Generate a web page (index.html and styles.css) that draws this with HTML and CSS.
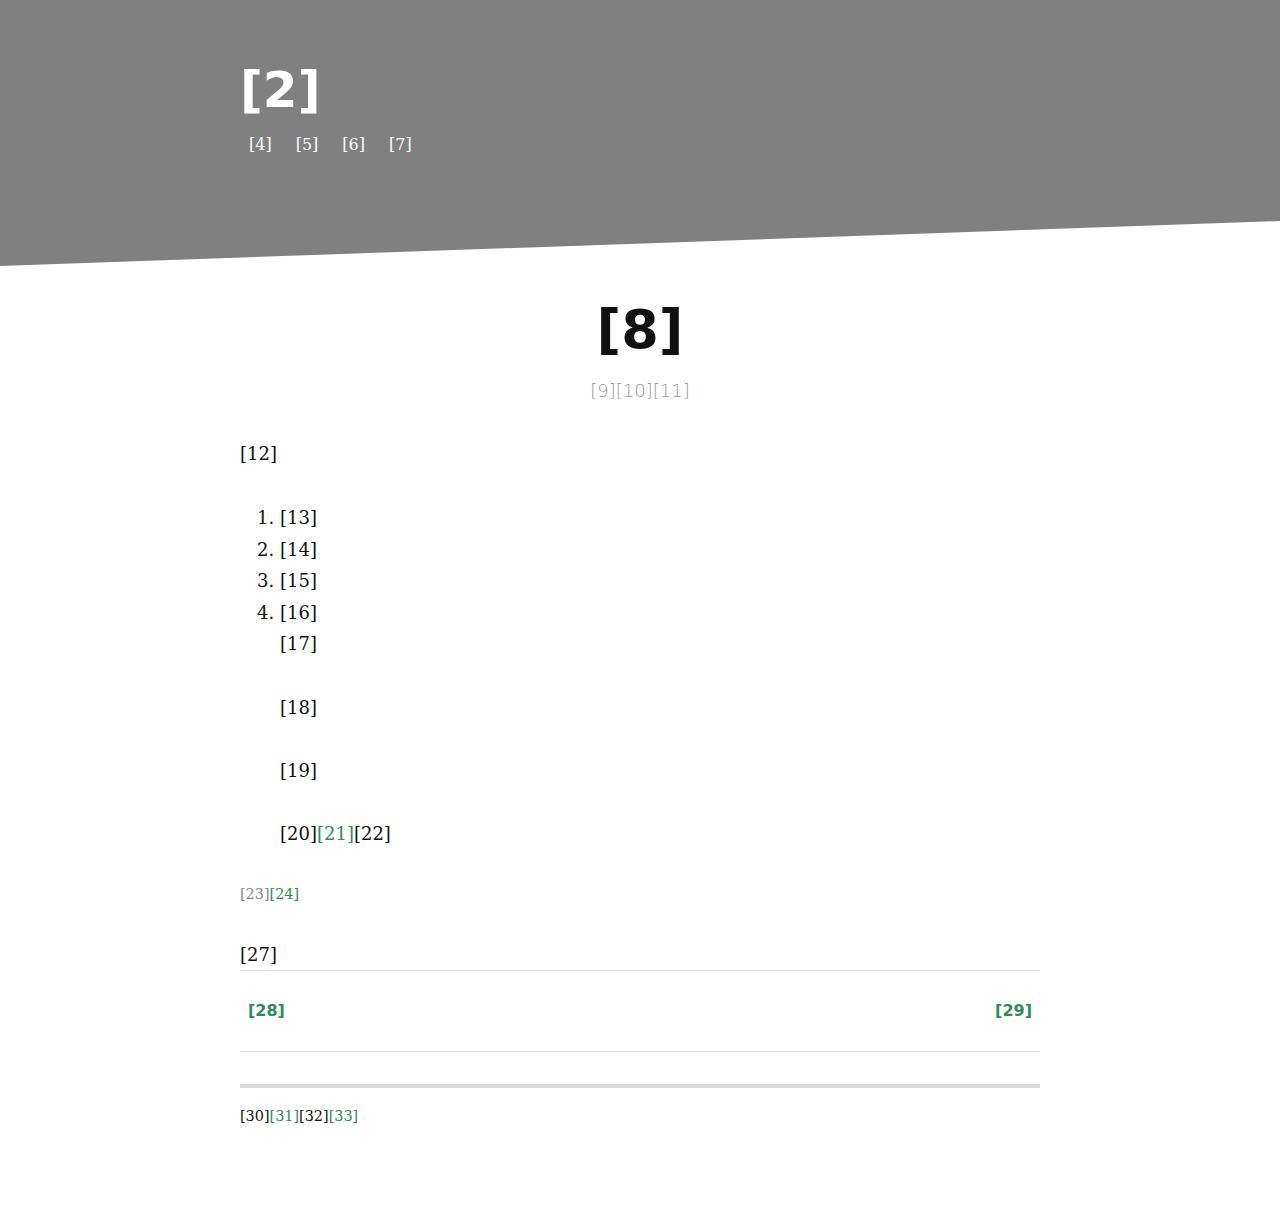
FILE: index.html
```html
<!DOCTYPE html>
<html>
<head>
<meta charset="utf-8">
<link rel="stylesheet" href="styles.css">
</head>
<body>
<header class="site-header">
  <div class="wrap">
    <h1 class="site-title">[2]</h1>
    <nav class="site-nav">
      <a href="#">[4]</a>
      <a href="#">[5]</a>
      <a href="#">[6]</a>
      <a href="#">[7]</a>
    </nav>
  </div>
</header>
<main class="wrap">
  <h2 class="post-title">[8]</h2>
  <div class="post-meta">[9][10][11]</div>
  <p class="para">[12]</p>
  <ol class="steps">
    <li>[13]</li>
    <li>[14]</li>
    <li>[15]</li>
    <li>[16]
      <div class="sub">
        <p class="para">[17]</p>
        <p class="para">[18]</p>
        <p class="para">[19]</p>
        <p class="para">[20]<a class="green" href="#">[21]</a>[22]</p>
      </div>
    </li>
  </ol>
  <p class="tags"><span class="muted">[23]</span><a class="green" href="#">[24]</a></p>
  <div class="related-title">[27]</div>
  <div class="pager">
    <a href="#">[28]</a>
    <a href="#">[29]</a>
  </div>
  <footer class="site-footer">
    <span>[30]</span><a class="green" href="#">[31]</a><span>[32]</span><a class="green" href="#">[33]</a>
  </footer>
</main>
</body>
</html>
```
FILE: styles.css
```css
html, body {
  margin: 0;
  padding: 0;
  background: #fff;
}
body {
  font-family: "DejaVu Serif", serif;
  font-size: 18px;
  line-height: 1.75;
  color: #111;
}
a { text-decoration: none; }
.wrap {
  width: 800px;
  margin: 0 auto;
}
.site-header {
  background: #808080;
  height: 266px;
  clip-path: polygon(0 0, 100% 0, 100% 83.1%, 0 100%);
  color: #fff;
}
.site-header .wrap {
  padding-top: 58px;
}
.site-title {
  margin: 0;
  font-family: "DejaVu Sans", sans-serif;
  font-weight: bold;
  font-size: 50px;
  line-height: 64px;
  color: #fff;
}
.site-nav {
  display: flex;
  gap: 24px;
  margin-left: 9px;
  margin-top: 11px;
  font-size: 16px;
  line-height: 24px;
}
.site-nav a { color: #fff; }
.post-title {
  margin: 30px 0 0;
  text-align: center;
  font-family: "DejaVu Sans", sans-serif;
  font-weight: bold;
  font-size: 54px;
  line-height: 68px;
  color: #111;
}
.post-meta {
  text-align: center;
  font-family: "DejaVu Sans", sans-serif;
  font-weight: 200;
  color: #999;
  margin-top: 11px;
  line-height: 32px;
}
.para {
  margin: 0 0 31.8px;
}
.post-meta + .para { margin-top: 31px; }
.steps {
  margin: 0;
  padding: 1px 0 0 40px;
}
.sub .para:first-child { margin-top: 0; }
.green { color: #2e8b57; }
.muted { color: #888; }
.tags {
  margin: 0;
  padding-top: 1px;
  font-size: 14.4px;
  line-height: 25px;
}
.related-title {
  margin-top: 33px;
  line-height: 30px;
  border-bottom: 1px solid #e5e5e5;
}
.pager {
  display: flex;
  justify-content: space-between;
  padding: 30px 8px;
  font-family: "DejaVu Sans", sans-serif;
  font-weight: bold;
  font-size: 16px;
  line-height: 20px;
  border-bottom: 1px solid #e5e5e5;
}
.pager a { color: #2e8b57; }
.site-footer {
  margin-top: 32px;
  border-top: 4px solid #d9d9d9;
  padding-top: 16px;
  font-size: 14.4px;
  line-height: 25px;
  padding-bottom: 80px;
}
```
